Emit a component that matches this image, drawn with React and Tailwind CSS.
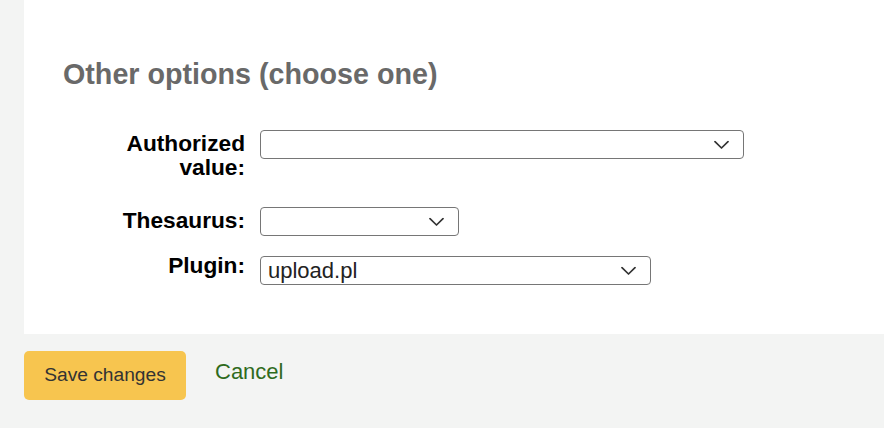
import React from "react";

const Chevron = () => (
  <svg
    className="absolute right-[14px] top-1/2 -translate-y-1/2"
    width="15"
    height="9"
    viewBox="0 0 15 9"
    fill="none"
  >
    <path d="M1 1.2 L7.5 7.5 L14 1.2" stroke="#333" strokeWidth="1.7" strokeLinecap="round" strokeLinejoin="round" />
  </svg>
);

const Select = ({ width, value }) => (
  <div
    className={`relative h-[29px] rounded-[4px] border border-[#767676] bg-white pl-[7px] text-[22px] leading-[27px] font-normal text-[#222] ${width}`}
  >
    {value}
    <Chevron />
  </div>
);

export default function App() {
  return (
    <div
      className="w-[884px] h-[428px] overflow-hidden bg-[#f3f4f3]"
      style={{ fontFamily: '"Liberation Sans", Arial, sans-serif' }}
    >
      {/* White form panel */}
      <div className="ml-[24px] h-[334px] bg-white pl-[39px] pt-[57px]">
        <h2 className="text-[28.7px] leading-[34px] font-bold text-[#696969]">
          Other options (choose one)
        </h2>

        <div className="mt-[39px] flex items-start gap-[15px]">
          <label className="mt-[1px] w-[182px] text-right text-[22.7px] leading-[24px] font-bold text-black">
            Authorized
            <br />
            value:
          </label>
          <Select width="w-[484px]" />
        </div>

        <div className="mt-[28px] flex items-start gap-[15px]">
          <label className="mt-[1px] w-[182px] text-right text-[22.7px] leading-[24px] font-bold text-black">
            Thesaurus:
          </label>
          <Select width="w-[199px]" />
        </div>

        <div className="mt-[20px] flex items-start gap-[15px]">
          <label className="-mt-[3px] w-[182px] text-right text-[22.7px] leading-[24px] font-bold text-black">
            Plugin:
          </label>
          <Select width="w-[391px]" value="upload.pl" />
        </div>
      </div>

      {/* Actions */}
      <div className="mt-[17px] ml-[24px] flex items-start">
        <button className="h-[49px] w-[162px] rounded-[5px] bg-[#f7c54f] text-[19.2px] text-[#333]">
          Save changes
        </button>
        <a className="ml-[29px] mt-[9px] text-[22px] leading-[24px] text-[#2f6b1d]">
          Cancel
        </a>
      </div>
    </div>
  );
}
